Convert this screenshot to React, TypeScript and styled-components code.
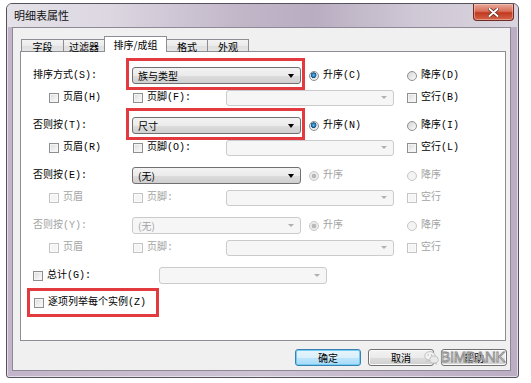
import styled, { createGlobalStyle, css } from "styled-components";

type Level = "on" | "partial" | "off";

interface SortGroup {
  label: string;
  value: string;
  asc: string;
  desc: string;
  header: string;
  footer: string;
  blank: string;
  level: Level;
  marked?: boolean;
}

const groups: SortGroup[] = [
  { label: "排序方式(S):", value: "族与类型", asc: "升序(C)", desc: "降序(D)", header: "页眉(H)", footer: "页脚(F):", blank: "空行(B)", level: "on", marked: true },
  { label: "否则按(T):", value: "尺寸", asc: "升序(N)", desc: "降序(I)", header: "页眉(R)", footer: "页脚(O):", blank: "空行(L)", level: "on", marked: true },
  { label: "否则按(E):", value: "(无)", asc: "升序", desc: "降序", header: "页眉", footer: "页脚:", blank: "空行", level: "partial" },
  { label: "否则按(Y):", value: "(无)", asc: "升序", desc: "降序", header: "页眉", footer: "页脚:", blank: "空行", level: "off" },
];

const tabs = [
  { name: "字段", width: 43 },
  { name: "过滤器", width: 42 },
  { name: "排序/成组", width: 63, active: true },
  { name: "格式", width: 42 },
  { name: "外观", width: 42 },
];

const GlobalStyle = createGlobalStyle`
  html, body {
    margin: 0;
    padding: 0;
    background: #fff;
  }
  body {
    font-family: "Liberation Mono", "Noto Sans CJK SC", monospace;
    font-size: 10px;
    color: #000;
  }
`;

const Page = styled.div`
  width: 531px;
  height: 383px;
  padding: 3px 0 0 6px;
  box-sizing: border-box;
  overflow: hidden;
`;

const Window = styled.div`
  width: 513px;
  height: 375px;
  box-sizing: border-box;
  border: 1px solid #58525e;
  border-radius: 6px 6px 3px 3px;
  padding: 0 7px 6px 5px;
  display: flex;
  flex-direction: column;
  background: linear-gradient(90deg, #c2b5c9 0%, #cdc3d3 50%, #bbadc3 100%);
  box-shadow: inset 0 0 0 1px rgba(255, 255, 255, 0.55);
`;

const TitleBar = styled.div`
  height: 23px;
  margin: 0 -7px 0 -5px;
  padding: 0 5px 0 6px;
  display: flex;
  justify-content: space-between;
  align-items: flex-start;
  border-radius: 5px 5px 0 0;
  background: linear-gradient(
    90deg,
    #e4e1e8 0%,
    #dcd7e1 20%,
    #c2b7c9 45%,
    #b9aec1 60%,
    #cfc8d5 80%,
    #d9d4de 100%
  );
`;

const Title = styled.span`
  font-family: "Noto Sans CJK SC", sans-serif;
  font-size: 11px;
  line-height: 22px;
  padding-left: 1px;
  color: #111;
`;

const CloseButton = styled.div`
  width: 41px;
  height: 17px;
  margin-right: -1px;
  box-sizing: border-box;
  border: 1px solid #6e2b24;
  border-top: none;
  border-radius: 0 0 4px 4px;
  display: flex;
  align-items: center;
  justify-content: center;
  background: linear-gradient(180deg, #e9a899 0%, #d8705a 45%, #c1391f 55%, #d3644a 100%);
  box-shadow: inset 0 0 0 1px rgba(255, 220, 210, 0.45);
`;

const Client = styled.div`
  flex: 1;
  border: 1px solid #8f8897;
  background: #f0f0f0;
  padding: 8px 4px 4px 7px;
  display: flex;
  flex-direction: column;
`;

const TabStrip = styled.div`
  height: 15px;
  padding-left: 1px;
  display: flex;
  align-items: flex-end;
  position: relative;
  z-index: 1;
`;

const Tab = styled.div<{ $w: number; $active?: boolean }>`
  width: ${(p) => p.$w}px;
  box-sizing: border-box;
  margin-left: -1px;
  border: 1px solid #8c8e94;
  border-bottom: none;
  text-align: center;
  font-family: "Noto Sans CJK SC", sans-serif;
  &:first-child {
    margin-left: 0;
  }
  ${(p) =>
    p.$active
      ? css`
          height: 16px;
          margin-bottom: -1px;
          line-height: 15px;
          background: #fff;
          position: relative;
          z-index: 2;
        `
      : css`
          height: 12px;
          line-height: 14px;
          background: linear-gradient(180deg, #f3f3f3 0%, #ebebeb 50%, #dedede 51%, #e5e5e5 100%);
        `}
`;

const Panel = styled.div`
  width: 486px;
  height: 290px;
  box-sizing: border-box;
  border: 1px solid #8c8e94;
  background: #fff;
  padding: 15px 0 0 12px;
  display: flex;
  flex-direction: column;
`;

const Groups = styled.div`
  display: flex;
  flex-direction: column;
  gap: 12px;
`;

const Group = styled.div`
  display: flex;
  flex-direction: column;
  gap: 5px;
`;

const MainRow = styled.div`
  height: 17px;
  display: grid;
  grid-template-columns: 99px 169px 106px auto;
  align-items: center;
`;

const SubRow = styled.div`
  height: 16px;
  display: grid;
  grid-template-columns: 99px 94px 168px auto;
  align-items: center;
  & > :first-child {
    padding-left: 16px;
  }
  & > :nth-child(2) {
    padding-left: 1px;
  }
  & > :last-child {
    padding-left: 13px;
  }
`;

const Text = styled.span<{ $off?: boolean }>`
  line-height: 17px;
  white-space: nowrap;
  color: ${(p) => (p.$off ? "#a3a3a3" : "#000")};
`;

const Option = styled.span<{ $off?: boolean }>`
  display: flex;
  align-items: center;
  gap: 4px;
  white-space: nowrap;
  line-height: 17px;
  color: ${(p) => (p.$off ? "#a3a3a3" : "#000")};
`;

const RadioCell = styled.div`
  padding-left: 8px;
`;

const Box = styled.span<{ $off?: boolean }>`
  width: 10px;
  height: 10px;
  box-sizing: border-box;
  flex: none;
  border: 1px solid ${(p) => (p.$off ? "#c4c4c4" : "#8e8f8f")};
  background: ${(p) =>
    p.$off ? "#f5f5f5" : "linear-gradient(135deg, #d9d9d9 0%, #f0f0f0 60%, #fbfbfb 100%)"};
  box-shadow: inset 0 0 0 1px ${(p) => (p.$off ? "#fafafa" : "#f4f4f4")};
`;

const Radio = styled.span<{ $off?: boolean; $on?: boolean }>`
  width: 10px;
  height: 10px;
  box-sizing: border-box;
  flex: none;
  border-radius: 50%;
  border: 1px solid ${(p) => (p.$off ? "#c6c6c6" : "#8e8f8f")};
  background: ${(p) =>
    p.$on
      ? p.$off
        ? "radial-gradient(circle, #b8b8b8 0 2px, #e9e9e9 2.6px, #f6f6f6 100%)"
        : "radial-gradient(circle at 45% 40%, #6fc3ea 0, #2a7fbf 1.6px, #174f86 2.6px, #e6e6e6 3.1px, #f8f8f8 100%)"
      : p.$off
      ? "#f3f3f3"
      : "linear-gradient(135deg, #d4d4d4 0%, #f0f0f0 70%, #fff 100%)"};
`;

const Combo = styled.div<{ $off?: boolean; $h?: number }>`
  height: ${(p) => p.$h ?? 17}px;
  box-sizing: border-box;
  border-radius: 3px;
  padding: 0 6px 0 5px;
  display: flex;
  align-items: center;
  justify-content: space-between;
  white-space: nowrap;
  font-family: "Noto Sans CJK SC", sans-serif;
  ${(p) =>
    p.$off
      ? css`
          border: 1px solid #c9cbcd;
          background: #f6f6f6;
          color: #a3a3a3;
        `
      : css`
          border: 1px solid #707070;
          background: linear-gradient(180deg, #f3f3f3 0%, #ebebeb 50%, #dddddd 51%, #d0d0d0 100%);
          color: #000;
        `}
`;

const Arrow = styled.span<{ $off?: boolean }>`
  width: 0;
  height: 0;
  border-left: ${(p) => (p.$off ? 3 : 3.5)}px solid transparent;
  border-right: ${(p) => (p.$off ? 3 : 3.5)}px solid transparent;
  border-top: ${(p) => (p.$off ? 3 : 4)}px solid ${(p) => (p.$off ? "#b0b0b0" : "#000")};
`;

const Marked = styled.div`
  position: relative;
  &::after {
    content: "";
    position: absolute;
    top: -9px;
    bottom: -6px;
    left: -6px;
    right: -4px;
    border: 3px solid #e33a40;
  }
`;

const TotalRow = styled.div`
  height: 17px;
  margin-top: 12px;
  display: grid;
  grid-template-columns: 126px 168px;
  align-items: center;
`;

const EveryRow = styled.div`
  height: 17px;
  margin-top: 10px;
  display: flex;
  align-items: center;
`;

const EveryLabel = styled(Option)`
  position: relative;
  margin-left: 1px;
  &::after {
    content: "";
    position: absolute;
    top: -6px;
    bottom: -6px;
    left: -7px;
    right: -13px;
    border: 3px solid #e33a40;
  }
`;

const ButtonBar = styled.div`
  margin-top: 8px;
  margin-right: -1px;
  height: 17px;
  display: flex;
  justify-content: flex-end;
  gap: 7px;
  position: relative;
`;

const Button = styled.div<{ $primary?: boolean }>`
  width: 66px;
  height: 17px;
  box-sizing: border-box;
  border-radius: 3px;
  display: flex;
  align-items: center;
  justify-content: center;
  font-family: "Noto Sans CJK SC", sans-serif;
  ${(p) =>
    p.$primary
      ? css`
          border: 1px solid #3c7fb1;
          background: linear-gradient(180deg, #e8f5fc 0%, #d9effa 50%, #bee6fd 51%, #a7d9f5 100%);
          box-shadow: inset 0 0 0 1px #70cdf4;
        `
      : css`
          border: 1px solid #707070;
          background: linear-gradient(180deg, #f2f2f2 0%, #ebebeb 50%, #dddddd 51%, #cfcfcf 100%);
          box-shadow: inset 0 0 0 1px #fbfbfb;
        `}
`;

const Watermark = styled.div`
  position: absolute;
  right: 2px;
  top: -2px;
  display: flex;
  align-items: center;
  gap: 1px;
  pointer-events: none;
`;

const WatermarkText = styled.span`
  font-family: "Liberation Sans", sans-serif;
  font-size: 15px;
  letter-spacing: -0.4px;
  color: rgba(232, 232, 232, 0.92);
  -webkit-text-stroke: 0.8px #8a8a8a;
  line-height: 20px;
`;

const CloseGlyph = () => (
  <svg width="11" height="9" viewBox="0 0 11 9">
    <path d="M1.5 1 L9.5 8 M9.5 1 L1.5 8" stroke="#5b2118" strokeWidth="3.4" strokeLinecap="round" />
    <path d="M1.5 1 L9.5 8 M9.5 1 L1.5 8" stroke="#fff" strokeWidth="2" strokeLinecap="round" />
  </svg>
);

const BubbleLogo = () => (
  <svg width="15" height="15" viewBox="0 0 15 15">
    <ellipse cx="6" cy="6" rx="5.2" ry="4.4" fill="#f2f2f2" stroke="#b5b5b5" strokeWidth="0.8" />
    <path d="M3 9.5 L2.4 11.8 L5 10.2 Z" fill="#f2f2f2" stroke="#b5b5b5" strokeWidth="0.6" />
    <ellipse cx="10" cy="9.6" rx="4.2" ry="3.6" fill="#e9e9e9" stroke="#b5b5b5" strokeWidth="0.8" />
    <path d="M12 12.6 L12.8 14.4 L10.6 13.1 Z" fill="#e9e9e9" stroke="#b5b5b5" strokeWidth="0.6" />
    <circle cx="4.3" cy="5" r="0.7" fill="#b0b0b0" />
    <circle cx="7.6" cy="5" r="0.7" fill="#b0b0b0" />
  </svg>
);

const SortGroupRows = ({ g }: { g: SortGroup }) => {
  const labelOff = g.level === "off";
  const restOff = g.level !== "on";
  const combo = (
    <Combo $off={labelOff}>
      <span>{g.value}</span>
      <Arrow $off={labelOff} />
    </Combo>
  );
  return (
    <Group>
      <MainRow>
        <Text $off={labelOff}>{g.label}</Text>
        {g.marked ? <Marked>{combo}</Marked> : combo}
        <RadioCell>
          <Option $off={restOff}>
            <Radio $on $off={restOff} />
            {g.asc}
          </Option>
        </RadioCell>
        <Option $off={restOff}>
          <Radio $off={restOff} />
          {g.desc}
        </Option>
      </MainRow>
      <SubRow>
        <Option $off={restOff}>
          <Box $off={restOff} />
          {g.header}
        </Option>
        <Option $off={restOff}>
          <Box $off={restOff} />
          {g.footer}
        </Option>
        <Combo $off $h={16}>
          <span />
          <Arrow $off />
        </Combo>
        <Option $off={restOff}>
          <Box $off={restOff} />
          {g.blank}
        </Option>
      </SubRow>
    </Group>
  );
};

const App = () => {
  return (
    <Page>
      <GlobalStyle />
      <Window>
        <TitleBar>
          <Title>明细表属性</Title>
          <CloseButton>
            <CloseGlyph />
          </CloseButton>
        </TitleBar>
        <Client>
          <TabStrip>
            {tabs.map((t) => (
              <Tab key={t.name} $w={t.width} $active={t.active}>
                {t.name}
              </Tab>
            ))}
          </TabStrip>
          <Panel>
            <Groups>
              {groups.map((g) => (
                <SortGroupRows key={g.label} g={g} />
              ))}
            </Groups>
            <TotalRow>
              <Option>
                <Box />
                总计(G):
              </Option>
              <Combo $off>
                <span />
                <Arrow $off />
              </Combo>
            </TotalRow>
            <EveryRow>
              <EveryLabel>
                <Box />
                逐项列举每个实例(Z)
              </EveryLabel>
            </EveryRow>
          </Panel>
          <ButtonBar>
            <Button $primary>确定</Button>
            <Button>取消</Button>
            <Button>帮助</Button>
            <Watermark>
              <BubbleLogo />
              <WatermarkText>BIMBANK</WatermarkText>
            </Watermark>
          </ButtonBar>
        </Client>
      </Window>
    </Page>
  );
};

export default App;
